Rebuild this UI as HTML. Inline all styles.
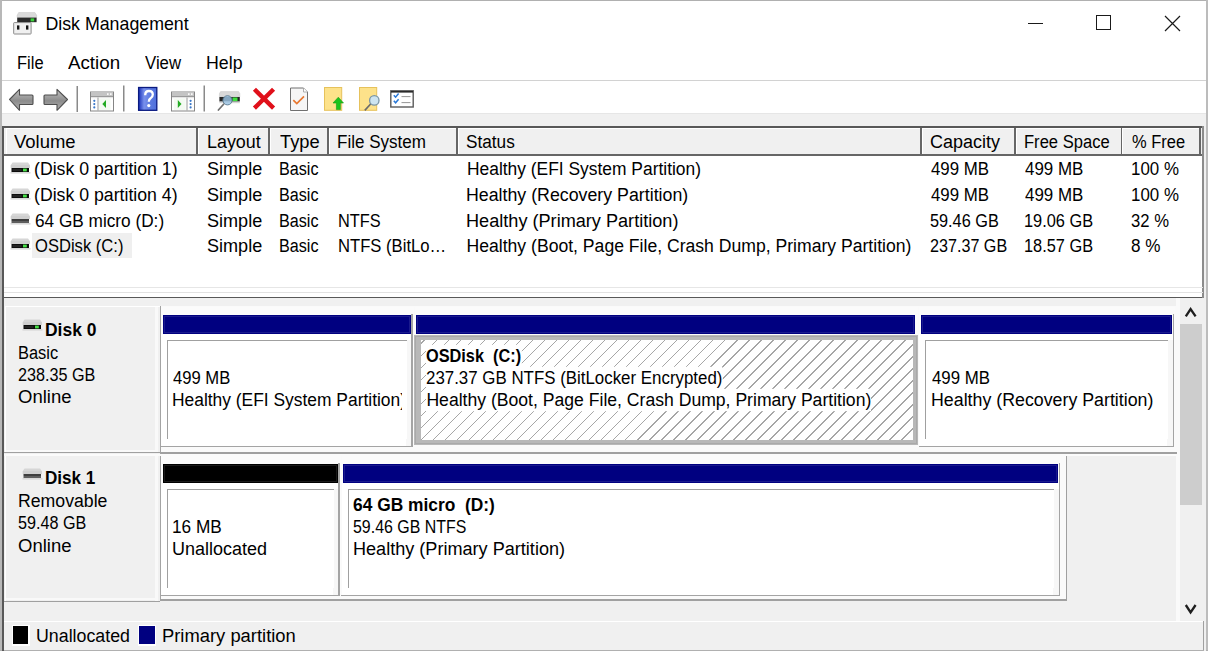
<!DOCTYPE html>
<html><head><meta charset="utf-8"><style>
html,body{margin:0;padding:0;width:1208px;height:651px;overflow:hidden;background:#fff}
.r{position:absolute}
.t{position:absolute;white-space:nowrap;line-height:20px;font-family:"Liberation Sans",sans-serif;color:#000;transform-origin:0 0}
.hatch{background:#fff repeating-linear-gradient(-45deg,#fff 0px,#fff 7.45px,#a6a6a6 7.45px,#a6a6a6 8.5px)}
</style></head><body>
<div class="r" style="left:0px;top:114px;width:1208px;height:12px;background:#f0f0f0;"></div>
<div class="r" style="left:0px;top:113px;width:1208px;height:1px;background:#e6e6e6;"></div>
<div class="r" style="left:0px;top:80px;width:1208px;height:1px;background:#d2d2d2;"></div>
<div class="r" style="left:0px;top:0px;width:1208px;height:1px;background:#b0b0b0;"></div>
<div class="r" style="left:0px;top:0px;width:2px;height:651px;background:#b8b8b8;"></div>
<div class="r" style="left:1206.4px;top:0px;width:1.599999999999909px;height:651px;background:#bcbcbc;"></div>
<div class="r" style="left:0px;top:650px;width:1208px;height:1px;background:#b0b0b0;"></div>
<svg class="r" style="left:13px;top:12px" width="25" height="23" viewBox="0 0 25 23">
<path d="M5.8 0.4 H21.8 L23.6 3.2 V5.6 H4.2 V3.2 Z" fill="#dadada" stroke="#c8c8c8" stroke-width="0.6"/>
<rect x="4.2" y="5.6" width="19.4" height="4.6" fill="#2a2a2a"/>
<rect x="17.6" y="6.4" width="3.6" height="3" fill="#3ad23a"/>
<rect x="0.7" y="10.6" width="17.4" height="11.4" rx="0.6" fill="#f0f0f0" stroke="#8a8a8a" stroke-width="1"/>
<rect x="4" y="13.4" width="2.4" height="4.2" fill="#141414"/>
<rect x="13" y="13.4" width="2.4" height="4.2" fill="#141414"/>
</svg>
<div class="t" style="left:45.40px;top:14.40px;font-size:17.8px;font-weight:normal;color:#000;">Disk Management</div>
<div class="r" style="left:1028px;top:22.5px;width:15px;height:1.1000000000000014px;background:#1a1a1a;"></div>
<div class="r" style="left:1096px;top:15px;width:15px;height:15px;background:transparent;border:1.2px solid #1a1a1a;box-sizing:border-box"></div>
<svg class="r" style="left:1164px;top:14.5px" width="17" height="17" viewBox="0 0 17 17"><path d="M1 1L16 16M16 1L1 16" stroke="#1a1a1a" stroke-width="1.2"/></svg>
<div class="t" style="left:16.56px;top:53.40px;font-size:17.6px;font-weight:normal;color:#000;transform:scaleX(0.9370);">File</div>
<div class="t" style="left:68.20px;top:53.40px;font-size:17.6px;font-weight:normal;color:#000;transform:scaleX(1.0646);">Action</div>
<div class="t" style="left:144.70px;top:53.40px;font-size:17.6px;font-weight:normal;color:#000;transform:scaleX(0.9526);">View</div>
<div class="t" style="left:205.69px;top:53.40px;font-size:17.6px;font-weight:normal;color:#000;transform:scaleX(1.0086);">Help</div>
<svg class="r" style="left:0px;top:82px" width="420" height="32" viewBox="0 0 420 32">
<defs>
<linearGradient id="ag" x1="0" y1="0" x2="0" y2="1"><stop offset="0" stop-color="#c4c4c4"/><stop offset="0.55" stop-color="#8c8c8c"/><stop offset="1" stop-color="#b0b0b0"/></linearGradient>
<linearGradient id="hg" x1="0" y1="0" x2="1" y2="0"><stop offset="0" stop-color="#1830b8"/><stop offset="0.3" stop-color="#7890ec"/><stop offset="0.65" stop-color="#5c7ae0"/><stop offset="1" stop-color="#5070dc"/></linearGradient>
</defs>
<path d="M9.5 17.5 L19.5 7.3 L19.5 13 L32 13 Q33 13 33 14 L33 21.5 Q33 22.5 32 22.5 L19.5 22.5 L19.5 28.3 Z" fill="url(#ag)" stroke="#4e4e4e" stroke-width="1.1" stroke-linejoin="round"/>
<path d="M67.5 17.5 L57 7.3 L57 13 L45 13 Q44 13 44 14 L44 21.5 Q44 22.5 45 22.5 L57 22.5 L57 28.3 Z" fill="url(#ag)" stroke="#4e4e4e" stroke-width="1.1" stroke-linejoin="round"/>
<rect x="76.5" y="4" width="1.5" height="26" fill="#8a8a8a"/>
<g transform="translate(90,9.5)">
<rect x="0.5" y="0.5" width="23" height="19" fill="#fff" stroke="#858585"/>
<rect x="1" y="1" width="22" height="3.5" fill="#c4c4c4"/>
<rect x="17" y="1.8" width="1.6" height="1.6" fill="#fff"/><rect x="20" y="1.8" width="1.6" height="1.6" fill="#fff"/>
<rect x="1" y="4.5" width="22" height="1.2" fill="#9a9a9a"/>
<rect x="1" y="5.7" width="22" height="1" fill="#e4e4e4"/>
<rect x="7.5" y="6" width="1" height="13" fill="#9a9a9a"/>
<circle cx="4.3" cy="9.3" r="1.1" fill="#3a78c8"/><circle cx="4.3" cy="12.6" r="1.1" fill="#3a78c8"/><circle cx="4.3" cy="15.9" r="1.1" fill="#3a78c8"/>
<rect x="9" y="7" width="11.5" height="11.5" fill="#f4faf2"/><path d="M12.3 12.5 L16 8.6 L16 16.4 Z" fill="#22aa22"/>
</g>
<rect x="123" y="3.5" width="1.5" height="26" fill="#8a8a8a"/>
<rect x="138.6" y="5.5" width="18.2" height="22.8" fill="url(#hg)" stroke="#0a1a80" stroke-width="1.3"/>
<path d="M145.2 13.2 Q145.2 9 149 9 Q152.8 9 152.8 12.6 Q152.8 15 150.6 16.2 Q148.8 17.3 148.8 19.8" fill="none" stroke="#fff" stroke-width="2.3"/>
<circle cx="148.8" cy="23.6" r="1.6" fill="#fff"/>
<g transform="translate(171,9.5)">
<rect x="0.5" y="0.5" width="23" height="19" fill="#fff" stroke="#858585"/>
<rect x="1" y="1" width="22" height="3.5" fill="#c4c4c4"/>
<rect x="17" y="1.8" width="1.6" height="1.6" fill="#fff"/><rect x="20" y="1.8" width="1.6" height="1.6" fill="#fff"/>
<rect x="1" y="4.5" width="22" height="1.2" fill="#9a9a9a"/>
<rect x="1" y="5.7" width="22" height="1" fill="#e4e4e4"/>
<rect x="15.5" y="6" width="1" height="13" fill="#9a9a9a"/>
<circle cx="19.6" cy="9.3" r="1.1" fill="#3a78c8"/><circle cx="19.6" cy="12.6" r="1.1" fill="#3a78c8"/><circle cx="19.6" cy="15.9" r="1.1" fill="#3a78c8"/>
<rect x="3" y="7" width="11.5" height="11.5" fill="#f4faf2"/><path d="M6.8 8.6 L10.5 12.5 L6.8 16.4 Z" fill="#22aa22"/>
</g>
<rect x="203.5" y="3.5" width="1.5" height="26" fill="#8a8a8a"/>
<g transform="translate(217,9)">
<path d="M3.6 0.6 H21.6 L22.8 2.6 V6 H2.4 V2.6 Z" fill="#d9d9d9" stroke="#c6c6c6" stroke-width="0.5"/>
<rect x="2.4" y="6" width="20.4" height="4.6" fill="#262626"/>
<rect x="2.4" y="10.6" width="20.4" height="1.6" fill="#d4d4d4"/>
<rect x="15.5" y="6.5" width="5" height="3.6" fill="#3ee03e"/>
<circle cx="10.5" cy="9.3" r="4.6" fill="#9cc4e4" fill-opacity="0.82" stroke="#58788e" stroke-width="0.9"/>
<path d="M6.6 13.2 L1.4 19" stroke="#707070" stroke-width="1.7" stroke-linecap="round"/>
</g>
<path d="M256 8.8 L272 24.6 M272 8.8 L256 24.6" stroke="#e0101a" stroke-width="4.4" stroke-linecap="square"/>
<g transform="translate(290,5.5)">
<path d="M0.5 0.5 L13.5 0.5 L17.5 4.5 L17.5 23 L0.5 23 Z" fill="#f6f6f6" stroke="#707070" stroke-width="1"/>
<path d="M13.5 0.5 L13.5 4.5 L17.5 4.5" fill="#fff" stroke="#9a9a9a" stroke-width="0.8"/>
<path d="M3.3 12.6 L6.8 16 L14 8.8" fill="none" stroke="#e87830" stroke-width="1.7"/>
</g>
<g transform="translate(324,5)">
<rect x="0.5" y="0.5" width="17.2" height="22.8" fill="#fde28a" stroke="#e6c25c" stroke-width="1"/>
<path d="M12.4 22.6 L12.4 16 L9 16 L14.3 10.2 L19.5 16 L16.4 16 L16.4 22.6 Z" fill="#1cc41c" stroke="#149c14" stroke-width="0.6"/>
</g>
<g transform="translate(359,5)">
<rect x="0.5" y="0.5" width="17.2" height="22.8" fill="#fde28a" stroke="#e6c25c" stroke-width="1"/>
<circle cx="15.3" cy="13.4" r="4.7" fill="#cde4f0" stroke="#7a96a6" stroke-width="1.3"/>
<path d="M11.6 17 L5.8 23.4" stroke="#6a6a6a" stroke-width="1.6"/>
</g>
<g transform="translate(390,8)">
<rect x="0.8" y="0.8" width="22.4" height="16.2" fill="#fff" stroke="#5a5a5a" stroke-width="1.4"/>
<rect x="1" y="1" width="22" height="1.6" fill="#2a2a2a"/>
<path d="M3.8 5.2 L5.6 7.2 L8.6 3.6 M3.8 10.8 L5.6 12.8 L8.6 9.2" fill="none" stroke="#2878d8" stroke-width="1.5"/>
<rect x="11.5" y="6" width="9" height="1.1" fill="#a0a0a0"/>
<rect x="11.5" y="12" width="9" height="1.1" fill="#a0a0a0"/>
</g>
</svg>
<div class="r" style="left:2px;top:126px;width:2px;height:525px;background:#585858;"></div>
<div class="r" style="left:4px;top:126px;width:1199.5px;height:172px;background:#ffffff;"></div>
<div class="r" style="left:3px;top:126px;width:1200.6px;height:1.5999999999999943px;background:#585858;"></div>
<div class="r" style="left:3px;top:296.5px;width:1200.6px;height:1.5px;background:#585858;"></div>
<div class="r" style="left:1203.5px;top:126px;width:2.900000000000091px;height:525px;background:#f0f0f0;"></div>
<div class="r" style="left:1202.3px;top:126px;width:1.2999999999999545px;height:172px;background:#8c8c8c;"></div>
<div class="r" style="left:4px;top:127.6px;width:1198.3px;height:27.400000000000006px;background:#f0f0f0;"></div>
<div class="r" style="left:4px;top:154px;width:1198.3px;height:1.5px;background:#666666;"></div>
<div class="r" style="left:5.5px;top:128px;width:190.5px;height:1px;background:#ffffff;"></div>
<div class="r" style="left:5.5px;top:128px;width:1.0px;height:26px;background:#ffffff;"></div>
<div class="r" style="left:196px;top:128px;width:1.5px;height:26px;background:#666666;"></div>
<div class="r" style="left:197.5px;top:128px;width:70.5px;height:1px;background:#ffffff;"></div>
<div class="r" style="left:197.5px;top:128px;width:1.0px;height:26px;background:#ffffff;"></div>
<div class="r" style="left:268px;top:128px;width:1.5px;height:26px;background:#666666;"></div>
<div class="r" style="left:269.5px;top:128px;width:57.5px;height:1px;background:#ffffff;"></div>
<div class="r" style="left:269.5px;top:128px;width:1.0px;height:26px;background:#ffffff;"></div>
<div class="r" style="left:327px;top:128px;width:1.5px;height:26px;background:#666666;"></div>
<div class="r" style="left:328.5px;top:128px;width:127.5px;height:1px;background:#ffffff;"></div>
<div class="r" style="left:328.5px;top:128px;width:1.0px;height:26px;background:#ffffff;"></div>
<div class="r" style="left:456px;top:128px;width:1.5px;height:26px;background:#666666;"></div>
<div class="r" style="left:457.5px;top:128px;width:462.5px;height:1px;background:#ffffff;"></div>
<div class="r" style="left:457.5px;top:128px;width:1.0px;height:26px;background:#ffffff;"></div>
<div class="r" style="left:920px;top:128px;width:1.5px;height:26px;background:#666666;"></div>
<div class="r" style="left:921.5px;top:128px;width:92.5px;height:1px;background:#ffffff;"></div>
<div class="r" style="left:921.5px;top:128px;width:1.0px;height:26px;background:#ffffff;"></div>
<div class="r" style="left:1014px;top:128px;width:1.5px;height:26px;background:#666666;"></div>
<div class="r" style="left:1015.5px;top:128px;width:105.0px;height:1px;background:#ffffff;"></div>
<div class="r" style="left:1015.5px;top:128px;width:1.0px;height:26px;background:#ffffff;"></div>
<div class="r" style="left:1120.5px;top:128px;width:1.5px;height:26px;background:#666666;"></div>
<div class="r" style="left:1122.0px;top:128px;width:77.29999999999995px;height:1px;background:#ffffff;"></div>
<div class="r" style="left:1122.0px;top:128px;width:1.0px;height:26px;background:#ffffff;"></div>
<div class="r" style="left:1199.3px;top:128px;width:1.5px;height:26px;background:#666666;"></div>
<div class="t" style="left:14.00px;top:131.80px;font-size:17.6px;font-weight:normal;color:#000;transform:scaleX(1.0500);">Volume</div>
<div class="t" style="left:206.98px;top:131.80px;font-size:17.6px;font-weight:normal;color:#000;transform:scaleX(1.0173);">Layout</div>
<div class="t" style="left:279.90px;top:131.80px;font-size:17.6px;font-weight:normal;color:#000;transform:scaleX(1.0405);">Type</div>
<div class="t" style="left:337.03px;top:131.80px;font-size:17.6px;font-weight:normal;color:#000;transform:scaleX(0.9689);">File System</div>
<div class="t" style="left:466.32px;top:131.80px;font-size:17.6px;font-weight:normal;color:#000;transform:scaleX(0.9771);">Status</div>
<div class="t" style="left:929.68px;top:131.80px;font-size:17.6px;font-weight:normal;color:#000;transform:scaleX(1.0224);">Capacity</div>
<div class="t" style="left:1024.06px;top:131.80px;font-size:17.6px;font-weight:normal;color:#000;transform:scaleX(0.9416);">Free Space</div>
<div class="t" style="left:1131.56px;top:131.80px;font-size:17.6px;font-weight:normal;color:#000;transform:scaleX(0.9364);">% Free</div>
<div class="r" style="left:4px;top:287px;width:1198.5px;height:1px;background:#e6e6e6;"></div>
<div class="r" style="left:4px;top:291.5px;width:1198.5px;height:1.0px;background:#e2e2e2;"></div>
<div class="r" style="left:31.5px;top:233px;width:100.30000000000001px;height:24.80000000000001px;background:#efefef;"></div>
<svg class="r" style="left:9.5px;top:161.9px" width="21" height="13" viewBox="0 0 21 13">
<path d="M2.5 0.5 H18 L19.8 3 V6 H0.8 V3 Z" fill="#d6d6d6"/>
<rect x="0.8" y="3" width="19" height="3" fill="#cfcfcf"/>
<rect x="1.5" y="6" width="17.5" height="4" fill="#0c0c0c"/><rect x="2.5" y="7.6" width="9" height="0.8" fill="#444"/><rect x="13" y="6.6" width="3.8" height="2.8" fill="#46e046"/>
<rect x="0.5" y="10" width="20" height="1.6" fill="#d8d8d8"/>
</svg>
<div class="t" style="left:34.49px;top:159.40px;font-size:17.6px;font-weight:normal;color:#000;transform:scaleX(1.0057);">(Disk 0 partition 1)</div>
<div class="t" style="left:206.97px;top:159.40px;font-size:17.6px;font-weight:normal;color:#000;transform:scaleX(1.0269);">Simple</div>
<div class="t" style="left:279.48px;top:159.40px;font-size:17.6px;font-weight:normal;color:#000;transform:scaleX(0.9190);">Basic</div>
<div class="t" style="left:466.51px;top:159.40px;font-size:17.6px;font-weight:normal;color:#000;transform:scaleX(0.9889);">Healthy (EFI System Partition)</div>
<div class="t" style="left:930.70px;top:159.40px;font-size:17.6px;font-weight:normal;color:#000;transform:scaleX(0.9567);">499 MB</div>
<div class="t" style="left:1025.00px;top:159.40px;font-size:17.6px;font-weight:normal;color:#000;transform:scaleX(0.9617);">499 MB</div>
<div class="t" style="left:1131.04px;top:159.40px;font-size:17.6px;font-weight:normal;color:#000;transform:scaleX(0.9604);">100 %</div>
<svg class="r" style="left:9.5px;top:187.5px" width="21" height="13" viewBox="0 0 21 13">
<path d="M2.5 0.5 H18 L19.8 3 V6 H0.8 V3 Z" fill="#d6d6d6"/>
<rect x="0.8" y="3" width="19" height="3" fill="#cfcfcf"/>
<rect x="1.5" y="6" width="17.5" height="4" fill="#0c0c0c"/><rect x="2.5" y="7.6" width="9" height="0.8" fill="#444"/><rect x="13" y="6.6" width="3.8" height="2.8" fill="#46e046"/>
<rect x="0.5" y="10" width="20" height="1.6" fill="#d8d8d8"/>
</svg>
<div class="t" style="left:34.49px;top:185.00px;font-size:17.6px;font-weight:normal;color:#000;transform:scaleX(1.0057);">(Disk 0 partition 4)</div>
<div class="t" style="left:206.97px;top:185.00px;font-size:17.6px;font-weight:normal;color:#000;transform:scaleX(1.0269);">Simple</div>
<div class="t" style="left:279.48px;top:185.00px;font-size:17.6px;font-weight:normal;color:#000;transform:scaleX(0.9190);">Basic</div>
<div class="t" style="left:466.49px;top:185.00px;font-size:17.6px;font-weight:normal;color:#000;transform:scaleX(1.0101);">Healthy (Recovery Partition)</div>
<div class="t" style="left:930.70px;top:185.00px;font-size:17.6px;font-weight:normal;color:#000;transform:scaleX(0.9567);">499 MB</div>
<div class="t" style="left:1025.00px;top:185.00px;font-size:17.6px;font-weight:normal;color:#000;transform:scaleX(0.9617);">499 MB</div>
<div class="t" style="left:1131.04px;top:185.00px;font-size:17.6px;font-weight:normal;color:#000;transform:scaleX(0.9604);">100 %</div>
<svg class="r" style="left:9.5px;top:213px" width="21" height="13" viewBox="0 0 21 13">
<path d="M2.5 0.5 H18 L19.8 3 V6 H0.8 V3 Z" fill="#d6d6d6"/>
<rect x="0.8" y="3" width="19" height="3" fill="#cfcfcf"/>
<rect x="1.5" y="6" width="17.5" height="2" fill="#3e3e3e"/><rect x="1.5" y="8" width="17.5" height="2" fill="#5e5e5e"/>
<rect x="0.5" y="10" width="20" height="1.6" fill="#d8d8d8"/>
</svg>
<div class="t" style="left:34.52px;top:210.50px;font-size:17.6px;font-weight:normal;color:#000;transform:scaleX(0.9785);">64 GB micro (D:)</div>
<div class="t" style="left:206.97px;top:210.50px;font-size:17.6px;font-weight:normal;color:#000;transform:scaleX(1.0269);">Simple</div>
<div class="t" style="left:279.48px;top:210.50px;font-size:17.6px;font-weight:normal;color:#000;transform:scaleX(0.9190);">Basic</div>
<div class="t" style="left:337.57px;top:210.50px;font-size:17.6px;font-weight:normal;color:#000;transform:scaleX(0.9295);">NTFS</div>
<div class="t" style="left:466.47px;top:210.50px;font-size:17.6px;font-weight:normal;color:#000;transform:scaleX(1.0299);">Healthy (Primary Partition)</div>
<div class="t" style="left:929.78px;top:210.50px;font-size:17.6px;font-weight:normal;color:#000;transform:scaleX(0.9250);">59.46 GB</div>
<div class="t" style="left:1024.07px;top:210.50px;font-size:17.6px;font-weight:normal;color:#000;transform:scaleX(0.9292);">19.06 GB</div>
<div class="t" style="left:1131.05px;top:210.50px;font-size:17.6px;font-weight:normal;color:#000;transform:scaleX(0.9462);">32 %</div>
<svg class="r" style="left:9.5px;top:238px" width="21" height="13" viewBox="0 0 21 13">
<path d="M2.5 0.5 H18 L19.8 3 V6 H0.8 V3 Z" fill="#d6d6d6"/>
<rect x="0.8" y="3" width="19" height="3" fill="#cfcfcf"/>
<rect x="1.5" y="6" width="17.5" height="4" fill="#0c0c0c"/><rect x="2.5" y="7.6" width="9" height="0.8" fill="#444"/><rect x="13" y="6.6" width="3.8" height="2.8" fill="#46e046"/>
<rect x="0.5" y="10" width="20" height="1.6" fill="#d8d8d8"/>
</svg>
<div class="t" style="left:34.56px;top:235.50px;font-size:17.6px;font-weight:normal;color:#000;transform:scaleX(0.9424);">OSDisk (C:)</div>
<div class="t" style="left:206.97px;top:235.50px;font-size:17.6px;font-weight:normal;color:#000;transform:scaleX(1.0269);">Simple</div>
<div class="t" style="left:279.48px;top:235.50px;font-size:17.6px;font-weight:normal;color:#000;transform:scaleX(0.9190);">Basic</div>
<div class="t" style="left:337.55px;top:235.50px;font-size:17.6px;font-weight:normal;color:#000;transform:scaleX(0.9459);">NTFS (BitLo&hellip;</div>
<div class="t" style="left:466.50px;top:235.50px;font-size:17.6px;font-weight:normal;color:#000;">Healthy (Boot, Page File, Crash Dump, Primary Partition)</div>
<div class="t" style="left:929.78px;top:235.50px;font-size:17.6px;font-weight:normal;color:#000;transform:scaleX(0.9171);">237.37 GB</div>
<div class="t" style="left:1024.07px;top:235.50px;font-size:17.6px;font-weight:normal;color:#000;transform:scaleX(0.9292);">18.57 GB</div>
<div class="t" style="left:1131.03px;top:235.50px;font-size:17.6px;font-weight:normal;color:#000;transform:scaleX(0.9724);">8 %</div>
<div class="r" style="left:4px;top:298px;width:1176px;height:323px;background:#f0f0f0;"></div>
<div class="r" style="left:1180px;top:298px;width:24px;height:323px;background:#f0f0f0;"></div>
<div class="r" style="left:1180px;top:324px;width:22px;height:181px;background:#cdcdcd;"></div>
<svg class="r" style="left:1184px;top:305.5px" width="14" height="13" viewBox="0 0 14 13"><path d="M1.8 10.4 L6.6 3 L11.6 10.4" fill="none" stroke="#1e1e1e" stroke-width="2.3"/></svg>
<svg class="r" style="left:1184px;top:602px" width="14" height="13" viewBox="0 0 14 13"><path d="M1.8 3 L6.6 10.4 L11.6 3" fill="none" stroke="#1e1e1e" stroke-width="2.3"/></svg>
<div class="r" style="left:1176px;top:298px;width:4px;height:323px;background:#fafafa;"></div>
<div class="r" style="left:5px;top:306px;width:155px;height:146px;background:#f0f0f0;border-top:1px solid #fff;border-left:1px solid #fff;box-sizing:border-box"></div>
<div class="r" style="left:4px;top:452px;width:156px;height:1px;background:#a0a0a0;"></div>
<div class="r" style="left:155px;top:307px;width:3px;height:145px;background:#f9f9f9;"></div>
<div class="r" style="left:6px;top:449.5px;width:152px;height:2.0px;background:#f9f9f9;"></div>
<svg class="r" style="left:21.5px;top:319px" width="21" height="13" viewBox="0 0 21 13">
<path d="M2.5 0.5 H18 L19.8 3 V6 H0.8 V3 Z" fill="#d6d6d6"/>
<rect x="0.8" y="3" width="19" height="3" fill="#cfcfcf"/>
<rect x="1.5" y="6" width="17.5" height="4" fill="#0c0c0c"/><rect x="2.5" y="7.6" width="9" height="0.8" fill="#444"/><rect x="13" y="6.6" width="3.8" height="2.8" fill="#46e046"/>
<rect x="0.5" y="10" width="20" height="1.6" fill="#d8d8d8"/>
</svg>
<div class="t" style="left:44.81px;top:319.90px;font-size:17.6px;font-weight:bold;color:#000;transform:scaleX(0.9920);">Disk 0</div>
<div class="t" style="left:18.07px;top:342.60px;font-size:17.6px;font-weight:normal;color:#000;transform:scaleX(0.9333);">Basic</div>
<div class="t" style="left:18.08px;top:364.90px;font-size:17.6px;font-weight:normal;color:#000;transform:scaleX(0.9195);">238.35 GB</div>
<div class="t" style="left:17.95px;top:387.20px;font-size:17.6px;font-weight:normal;color:#000;transform:scaleX(1.0531);">Online</div>
<div class="r" style="left:5px;top:454.5px;width:155px;height:146.0px;background:#f0f0f0;border-top:1px solid #fff;border-left:1px solid #fff;box-sizing:border-box"></div>
<div class="r" style="left:4px;top:600.5px;width:156px;height:1.0px;background:#a0a0a0;"></div>
<div class="r" style="left:155px;top:455.5px;width:3px;height:145.0px;background:#f9f9f9;"></div>
<div class="r" style="left:6px;top:598.0px;width:152px;height:2.0px;background:#f9f9f9;"></div>
<svg class="r" style="left:21.5px;top:467.5px" width="21" height="13" viewBox="0 0 21 13">
<path d="M2.5 0.5 H18 L19.8 3 V6 H0.8 V3 Z" fill="#d6d6d6"/>
<rect x="0.8" y="3" width="19" height="3" fill="#cfcfcf"/>
<rect x="1.5" y="6" width="17.5" height="2" fill="#3e3e3e"/><rect x="1.5" y="8" width="17.5" height="2" fill="#5e5e5e"/>
<rect x="0.5" y="10" width="20" height="1.6" fill="#d8d8d8"/>
</svg>
<div class="t" style="left:44.83px;top:468.40px;font-size:17.6px;font-weight:bold;color:#000;transform:scaleX(0.9720);">Disk 1</div>
<div class="t" style="left:18.00px;top:491.10px;font-size:17.6px;font-weight:normal;color:#000;transform:scaleX(1.0046);">Removable</div>
<div class="t" style="left:18.08px;top:513.40px;font-size:17.6px;font-weight:normal;color:#000;transform:scaleX(0.9194);">59.48 GB</div>
<div class="t" style="left:17.95px;top:535.70px;font-size:17.6px;font-weight:normal;color:#000;transform:scaleX(1.0531);">Online</div>
<div class="r" style="left:160px;top:306px;width:1017px;height:147px;background:#fafafa;"></div>
<div class="r" style="left:159.5px;top:306px;width:1.5px;height:147px;background:#a4a4a4;"></div>
<div class="r" style="left:160px;top:452px;width:1017px;height:1.5px;background:#a0a0a0;"></div>
<div class="r" style="left:161px;top:307px;width:252.60000000000002px;height:138px;background:#fbfbfb;"></div>
<div class="r" style="left:162.5px;top:315px;width:248.3px;height:19px;background:#000080;"></div>
<div class="r" style="left:163.5px;top:316px;width:246.3px;height:17px;background:transparent;border:1px solid rgba(255,255,255,0.10);box-sizing:border-box"></div>
<div class="r" style="left:161px;top:334px;width:250.40000000000003px;height:111.5px;background:#ffffff;"></div>
<div class="r" style="left:405.6px;top:339.5px;width:5.800000000000011px;height:106.0px;background:#f7f7f7;"></div>
<div class="r" style="left:167px;top:339.5px;width:239.60000000000002px;height:99.5px;background:#ffffff;border-top:1px solid #a0a0a0;border-left:1px solid #a0a0a0;box-sizing:border-box"></div>
<div class="r" style="left:160.5px;top:445.5px;width:252.40000000000003px;height:1.3000000000000114px;background:#a4a4a4;"></div>
<div class="r" style="left:411.40000000000003px;top:314px;width:1.5px;height:132.8px;background:#a4a4a4;"></div>
<div class="r" style="left:169px;top:339px;width:232.5px;height:100px;overflow:hidden"><div class="t" style="left:3.90px;top:28.70px;font-size:17.6px;font-weight:normal;color:#000;transform:scaleX(0.9450);">499 MB</div>
<div class="t" style="left:2.91px;top:51.20px;font-size:17.6px;font-weight:normal;color:#000;transform:scaleX(0.9889);">Healthy (EFI System Partition)</div>
</div>
<div class="r" style="left:414.6px;top:307px;width:503.4px;height:138px;background:#fbfbfb;"></div>
<div class="r" style="left:416.1px;top:315px;width:499.1px;height:19px;background:#000080;"></div>
<div class="r" style="left:417.1px;top:316px;width:497.1px;height:17px;background:transparent;border:1px solid rgba(255,255,255,0.10);box-sizing:border-box"></div>
<div class="r" style="left:413.6px;top:334.6px;width:504.19999999999993px;height:110.09999999999997px;background:#b8b8b8;"></div>
<div class="r" style="left:414.6px;top:335.6px;width:502.19999999999993px;height:108.09999999999997px;background:transparent;border:1px solid #a9a9a9;box-sizing:border-box"></div>
<div class="r hatch" style="left:420.6px;top:340px;width:492.09999999999997px;height:99.6px"></div>
<div class="r" style="left:422.6px;top:339px;width:489.4px;height:100px;overflow:hidden"><div class="t" style="left:3.87px;top:6.70px;font-size:17.6px;font-weight:bold;color:#000;transform:scaleX(0.9267);background:#fff;box-shadow:0 1.2px 0 #fff,0 -1.2px 0 #fff;">OSDisk&nbsp; (C:)</div>
<div class="t" style="left:3.84px;top:28.70px;font-size:17.6px;font-weight:normal;color:#000;transform:scaleX(0.9593);background:#fff;box-shadow:0 1.2px 0 #fff,0 -1.2px 0 #fff;">237.37 GB NTFS (BitLocker Encrypted)</div>
<div class="t" style="left:3.80px;top:51.20px;font-size:17.6px;font-weight:normal;color:#000;background:#fff;box-shadow:0 1.2px 0 #fff,0 -1.2px 0 #fff;">Healthy (Boot, Page File, Crash Dump, Primary Partition)</div>
</div>
<div class="r" style="left:919px;top:307px;width:256px;height:138px;background:#fbfbfb;"></div>
<div class="r" style="left:920.5px;top:315px;width:251.70000000000005px;height:19px;background:#000080;"></div>
<div class="r" style="left:921.5px;top:316px;width:249.70000000000005px;height:17px;background:transparent;border:1px solid rgba(255,255,255,0.10);box-sizing:border-box"></div>
<div class="r" style="left:919px;top:334px;width:253.79999999999995px;height:111.5px;background:#ffffff;"></div>
<div class="r" style="left:1167px;top:339.5px;width:5.7999999999999545px;height:106.0px;background:#f7f7f7;"></div>
<div class="r" style="left:925px;top:339.5px;width:243px;height:99.5px;background:#ffffff;border-top:1px solid #a0a0a0;border-left:1px solid #a0a0a0;box-sizing:border-box"></div>
<div class="r" style="left:918.5px;top:445.5px;width:255.79999999999995px;height:1.3000000000000114px;background:#a4a4a4;"></div>
<div class="r" style="left:1172.8px;top:314px;width:1.5px;height:132.8px;background:#a4a4a4;"></div>
<div class="r" style="left:927px;top:339px;width:242px;height:100px;overflow:hidden"><div class="t" style="left:5.20px;top:28.70px;font-size:17.6px;font-weight:normal;color:#000;transform:scaleX(0.9567);">499 MB</div>
<div class="t" style="left:4.19px;top:51.20px;font-size:17.6px;font-weight:normal;color:#000;transform:scaleX(1.0110);">Healthy (Recovery Partition)</div>
</div>
<div class="r" style="left:4px;top:453.5px;width:1172px;height:2.0px;background:#fbfbfb;"></div>
<div class="r" style="left:160px;top:456px;width:907px;height:144px;background:#fafafa;"></div>
<div class="r" style="left:159.5px;top:456px;width:1.5px;height:144px;background:#a4a4a4;"></div>
<div class="r" style="left:160px;top:599px;width:907px;height:1.5px;background:#a0a0a0;"></div>
<div class="r" style="left:1065.5px;top:456px;width:1.5px;height:144.5px;background:#a0a0a0;"></div>
<div class="r" style="left:161px;top:456px;width:179.5px;height:138px;background:#fbfbfb;"></div>
<div class="r" style="left:162.5px;top:464px;width:175.2px;height:19px;background:#000000;"></div>
<div class="r" style="left:163.5px;top:465px;width:173.2px;height:17px;background:transparent;border:1px solid rgba(255,255,255,0.10);box-sizing:border-box"></div>
<div class="r" style="left:161px;top:483px;width:177.3px;height:111.5px;background:#ffffff;"></div>
<div class="r" style="left:332.5px;top:488.5px;width:5.800000000000011px;height:106.0px;background:#f7f7f7;"></div>
<div class="r" style="left:167px;top:488.5px;width:166.5px;height:99.5px;background:#ffffff;border-top:1px solid #a0a0a0;border-left:1px solid #a0a0a0;box-sizing:border-box"></div>
<div class="r" style="left:160.5px;top:594.5px;width:179.3px;height:1.2999999999999545px;background:#a4a4a4;"></div>
<div class="r" style="left:338.3px;top:463px;width:1.5px;height:132.79999999999995px;background:#a4a4a4;"></div>
<div class="r" style="left:169px;top:488px;width:165.5px;height:100px;overflow:hidden"><div class="t" style="left:3.32px;top:28.70px;font-size:17.6px;font-weight:normal;color:#000;transform:scaleX(0.9796);">16 MB</div>
<div class="t" style="left:3.28px;top:51.20px;font-size:17.6px;font-weight:normal;color:#000;transform:scaleX(1.0220);">Unallocated</div>
</div>
<div class="r" style="left:341.5px;top:456px;width:719.5px;height:138px;background:#fbfbfb;"></div>
<div class="r" style="left:343.0px;top:464px;width:715.2px;height:19px;background:#000080;"></div>
<div class="r" style="left:344.0px;top:465px;width:713.2px;height:17px;background:transparent;border:1px solid rgba(255,255,255,0.10);box-sizing:border-box"></div>
<div class="r" style="left:341.5px;top:483px;width:717.3px;height:111.5px;background:#ffffff;"></div>
<div class="r" style="left:1053px;top:488.5px;width:5.7999999999999545px;height:106.0px;background:#f7f7f7;"></div>
<div class="r" style="left:347.5px;top:488.5px;width:706.5px;height:99.5px;background:#ffffff;border-top:1px solid #a0a0a0;border-left:1px solid #a0a0a0;box-sizing:border-box"></div>
<div class="r" style="left:341.0px;top:594.5px;width:719.3px;height:1.2999999999999545px;background:#a4a4a4;"></div>
<div class="r" style="left:1058.8px;top:463px;width:1.5px;height:132.79999999999995px;background:#a4a4a4;"></div>
<div class="r" style="left:349.5px;top:488px;width:705.5px;height:100px;overflow:hidden"><div class="t" style="left:3.41px;top:6.70px;font-size:17.6px;font-weight:bold;color:#000;transform:scaleX(0.9866);">64 GB micro&nbsp; (D:)</div>
<div class="t" style="left:3.49px;top:28.70px;font-size:17.6px;font-weight:normal;color:#000;transform:scaleX(0.9056);">59.46 GB NTFS</div>
<div class="t" style="left:3.37px;top:51.20px;font-size:17.6px;font-weight:normal;color:#000;transform:scaleX(1.0279);">Healthy (Primary Partition)</div>
</div>
<div class="r" style="left:4px;top:621px;width:1200px;height:29px;background:#f0f0f0;"></div>
<div class="r" style="left:4px;top:621px;width:1200px;height:1px;background:#ffffff;"></div>
<div class="r" style="left:1202.5px;top:621px;width:1.5px;height:29px;background:#a0a0a0;"></div>
<div class="r" style="left:12px;top:625px;width:18px;height:21px;background:#ffffff;"></div>
<div class="r" style="left:13px;top:626.3px;width:15.3px;height:18.200000000000045px;background:#000000;"></div>
<div class="t" style="left:36.09px;top:625.70px;font-size:17.6px;font-weight:normal;color:#000;transform:scaleX(1.0110);">Unallocated</div>
<div class="r" style="left:138px;top:625px;width:18px;height:21px;background:#ffffff;"></div>
<div class="r" style="left:139px;top:626.3px;width:15.5px;height:18.200000000000045px;background:#000080;"></div>
<div class="t" style="left:162.06px;top:625.70px;font-size:17.6px;font-weight:normal;color:#000;transform:scaleX(1.0444);">Primary partition</div>
</body></html>
